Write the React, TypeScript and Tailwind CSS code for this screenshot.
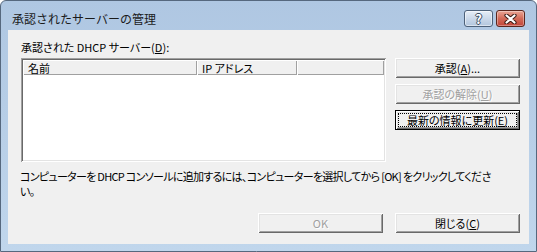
import clsx from "clsx";
import type { ReactNode } from "react";

const FONT = "font-['Noto_Sans_CJK_JP',sans-serif] [font-feature-settings:'palt']";

const RAISED =
  "shadow-[inset_1px_1px_#ffffff,inset_-1px_-1px_#696969,inset_2px_2px_#e3e3e3,inset_-2px_-2px_#a0a0a0]";

function Btn({
  children,
  disabled,
  isDefault,
}: {
  children: ReactNode;
  disabled?: boolean;
  isDefault?: boolean;
}) {
  return (
    <div
      className={clsx(
        "h-[20px] w-[125px] flex items-center justify-center bg-[#f0f0f0] text-[11px] leading-[14px] shrink-0",
        RAISED,
        isDefault && "border border-black p-[2px]",
        disabled ? "text-[#a0a0a0] [text-shadow:1px_1px_#ffffff]" : "text-black"
      )}
    >
      {isDefault ? (
        <span className="w-full h-full flex items-center justify-center border border-dotted border-black">
          {children}
        </span>
      ) : (
        children
      )}
    </div>
  );
}

function U({ children }: { children: ReactNode }) {
  return <span className="underline underline-offset-[1px]">{children}</span>;
}

function HeaderCell({ children, className }: { children?: ReactNode; className?: string }) {
  return (
    <div
      className={clsx(
        "h-full flex items-center pl-[5px] bg-[#f0f0f0] shadow-[inset_1px_1px_#ffffff,inset_-1px_-1px_#a0a0a0] text-[11px] leading-[14px]",
        className
      )}
    >
      {children}
    </div>
  );
}

export default function App() {
  return (
    <div className={clsx("w-[537px] h-[252px] text-black", FONT)}>
      <div className="w-full h-full flex flex-col rounded-t-[6px] border border-[#56687e] bg-gradient-to-b from-[#afc7e2] to-[#c0d6ec] px-[7px] pb-[7px]">
        {/* title bar */}
        <div className="h-[29px] shrink-0 flex items-center pt-[6px] pl-[4px] pr-[4px]">
          <span className="flex-1 text-[12px] leading-[14px] text-[#1b1b1b] [font-feature-settings:normal]">
            承認されたサーバーの管理
          </span>
          <div className="flex gap-[3px]">
            <div className="w-[29px] h-[17px] rounded-[3px] border border-[#4d6179] bg-gradient-to-b from-[#e6eef7] via-[#cbd9ea] to-[#b2c6dd] flex items-center justify-center shadow-[inset_0_0_0_1px_rgba(255,255,255,0.5)]">
              <span className="text-[13px] leading-[13px] font-bold text-white [text-shadow:1px_0_#3a4c62,-1px_0_#3a4c62,0_1px_#3a4c62,0_-1px_#3a4c62]">
                ?
              </span>
            </div>
            <div className="w-[29px] h-[17px] rounded-[3px] border border-[#5b261d] bg-gradient-to-b from-[#eaa595] via-[#d36a58] to-[#c2453a] flex items-center justify-center shadow-[inset_0_0_0_1px_rgba(255,255,255,0.35)]">
              <svg width="13" height="10" viewBox="0 0 13 10">
                <path d="M2.5 1.5 L10.5 8.5 M10.5 1.5 L2.5 8.5" stroke="#3b1a14" strokeWidth="4.2" strokeLinecap="round" />
                <path d="M2.5 1.5 L10.5 8.5 M10.5 1.5 L2.5 8.5" stroke="#ffffff" strokeWidth="2.2" strokeLinecap="round" />
              </svg>
            </div>
          </div>
        </div>

        {/* client area */}
        <div className="flex-1 bg-[#f0f0f0] flex flex-col pl-[13px] pr-[9px] pt-[10px] pb-[11px]">
          <div className="h-[14px] text-[11px] leading-[14px]">
            承認された DHCP サーバー(<U>D</U>):
          </div>

          <div className="flex mt-[4px]">
            <div className="w-[365px] h-[104px] bg-white p-[2px] shadow-[inset_1px_1px_#a0a0a0,inset_-1px_-1px_#ffffff,inset_2px_2px_#696969,inset_-2px_-2px_#e3e3e3] flex flex-col">
              <div className="h-[15px] flex shrink-0">
                <HeaderCell className="w-[174px]">名前</HeaderCell>
                <HeaderCell className="w-[100px]">IP アドレス</HeaderCell>
                <HeaderCell className="flex-1" />
              </div>
              <div className="flex-1 bg-white" />
            </div>

            <div className="ml-[9px] flex flex-col gap-[6px]">
              <Btn>
                承認(<U>A</U>)...
              </Btn>
              <Btn disabled>
                承認の解除(<U>U</U>)
              </Btn>
              <Btn isDefault>
                最新の情報に更新(<U>E</U>)
              </Btn>
            </div>
          </div>

          <p className="mt-[7px] text-[11px] leading-[15px] tracking-[-0.7px] whitespace-nowrap -ml-[1px]">
            コンピューターを DHCP コンソールに追加するには、コンピューターを選択してから [OK] をクリックしてくださ
            <br />
            い。
          </p>

          <div className="mt-auto flex justify-end gap-[12px]">
            <Btn disabled>OK</Btn>
            <Btn>
              閉じる(<U>C</U>)
            </Btn>
          </div>
        </div>
      </div>
    </div>
  );
}
